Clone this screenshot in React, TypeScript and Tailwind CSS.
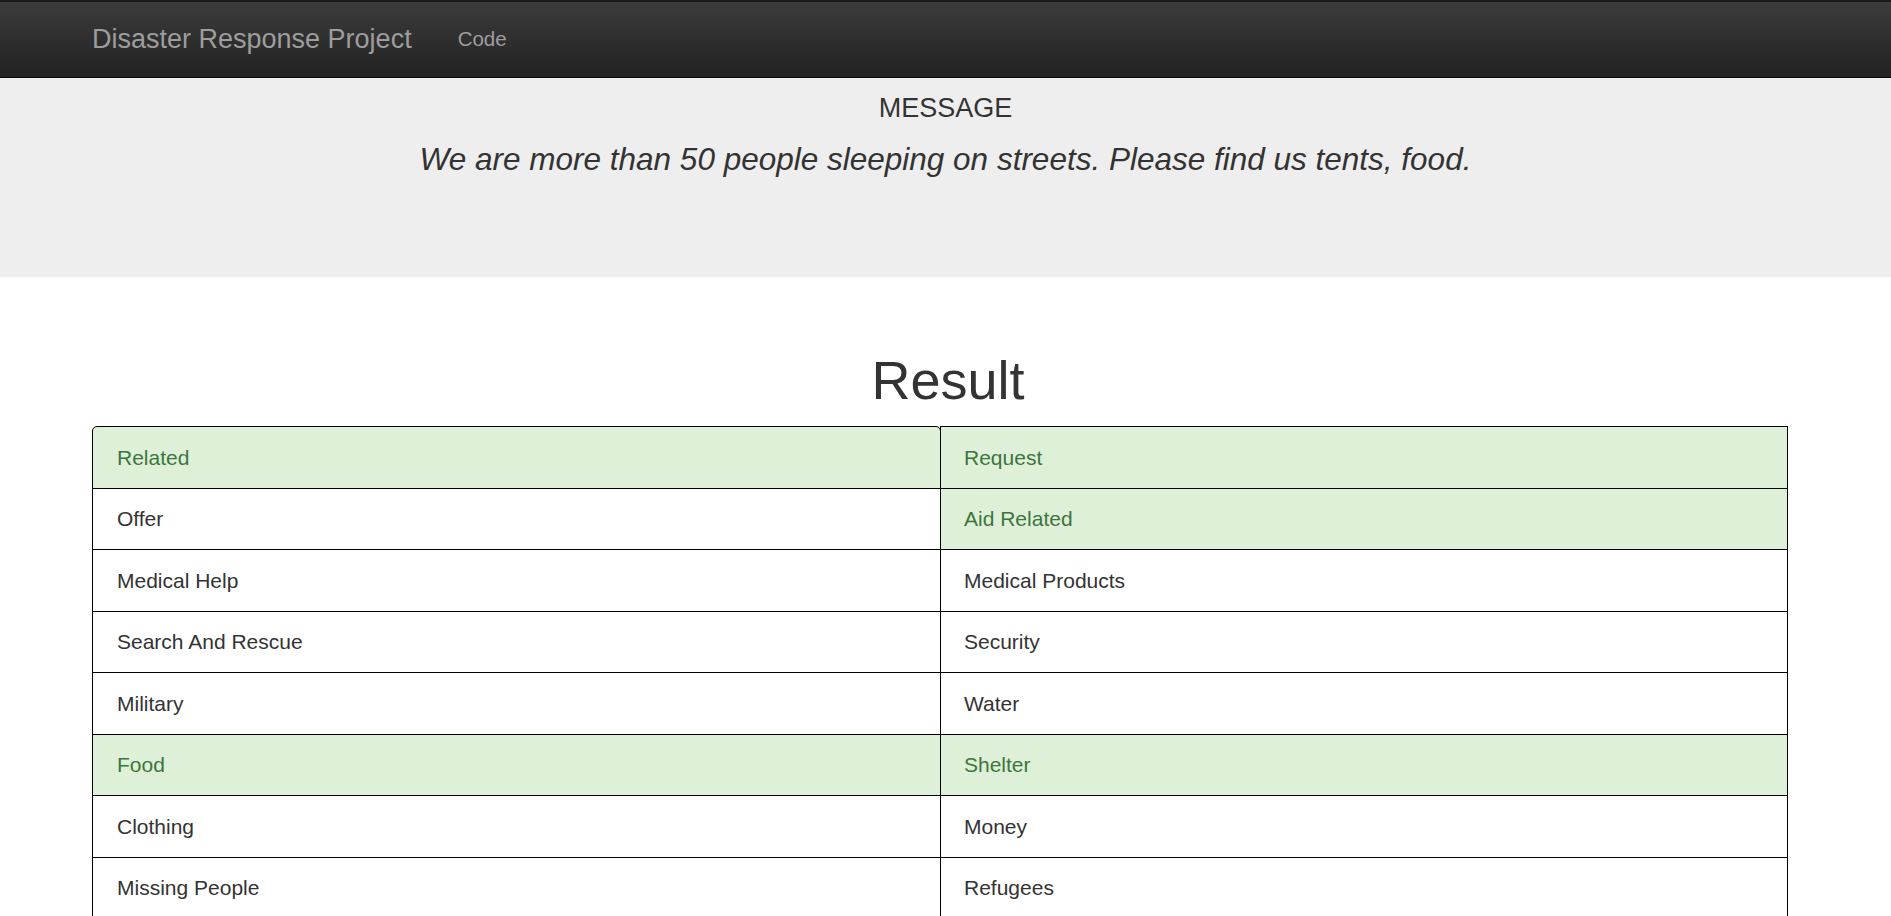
const left = [
  { name: 'Related', hit: true },
  { name: 'Offer' },
  { name: 'Medical Help' },
  { name: 'Search And Rescue' },
  { name: 'Military' },
  { name: 'Food', hit: true },
  { name: 'Clothing' },
  { name: 'Missing People' },
  { name: 'Death' },
  { name: 'Infrastructure Related' },
  { name: 'Buildings' },
  { name: 'Tools' },
  { name: 'Shops' },
  { name: 'Other Infrastructure' },
  { name: 'Floods' },
  { name: 'Fire' },
  { name: 'Cold' },
  { name: 'Direct Report' },
]

const right = [
  { name: 'Request', hit: true },
  { name: 'Aid Related', hit: true },
  { name: 'Medical Products' },
  { name: 'Security' },
  { name: 'Water' },
  { name: 'Shelter', hit: true },
  { name: 'Money' },
  { name: 'Refugees' },
  { name: 'Other Aid' },
  { name: 'Transport' },
  { name: 'Electricity' },
  { name: 'Hospitals' },
  { name: 'Aid Centers' },
  { name: 'Weather Related' },
  { name: 'Storm' },
  { name: 'Earthquake' },
  { name: 'Other Weather' },
]

type Item = { name: string, hit?: boolean }

const ResultColumn = ({ items, side }: { items: Item[], side: 'left' | 'right' }) => (
  <ul className={side === 'left' ? 'w-[849px] flex flex-col' : 'flex-1 -ml-px flex flex-col'}>
    {items.map((item, i) => (
      <li
        key={item.name}
        className={[
          'h-[62.5px] flex items-center border border-black text-[21px]',
          i > 0 ? '-mt-px' : '',
          side === 'left' ? 'pl-[24px]' : 'pl-[23px]',
          i === 0 && side === 'left' ? 'rounded-t-[5px]' : '',
          item.hit ? 'bg-[#dff0d8] text-[#3c763d]' : 'bg-white text-[#333]',
        ].join(' ')}
      >
        {item.name}
      </li>
    ))}
  </ul>
)

const App = () => {
  return (
    <div className="min-h-screen bg-white font-['Liberation_Sans',Arial,sans-serif] text-[#333]">
      {/* navbar */}
      <nav className="h-[78px] border-t-2 border-b border-t-[#1a1a1a] border-b-[#080808] bg-gradient-to-b from-[#3c3c3c] to-[#222] flex items-center pl-[92px]">
        <span className="text-[27px] text-[#9d9d9d]">Disaster Response Project</span>
        <a className="ml-[46px] text-[20.5px] text-[#9d9d9d]">Code</a>
      </nav>

      {/* message */}
      <div className="h-[199px] bg-[#eee] flex flex-col items-center pt-[15px]">
        <h4 className="text-[27px] leading-[30px]">MESSAGE</h4>
        <h3 className="mt-[19px] text-[31.5px] leading-[34px] italic">
          We are more than 50 people sleeping on streets. Please find us tents, food.
        </h3>
      </div>

      {/* result */}
      <div className="pt-[73px] pb-[40px]">
        <h1 className="text-center text-[54px] leading-[60px] pl-[5px]">Result</h1>
        <div className="mt-[16px] ml-[92px] w-[1696px] flex items-start">
          <ResultColumn items={left} side="left" />
          <ResultColumn items={right} side="right" />
        </div>
      </div>
    </div>
  )
}

export default App
